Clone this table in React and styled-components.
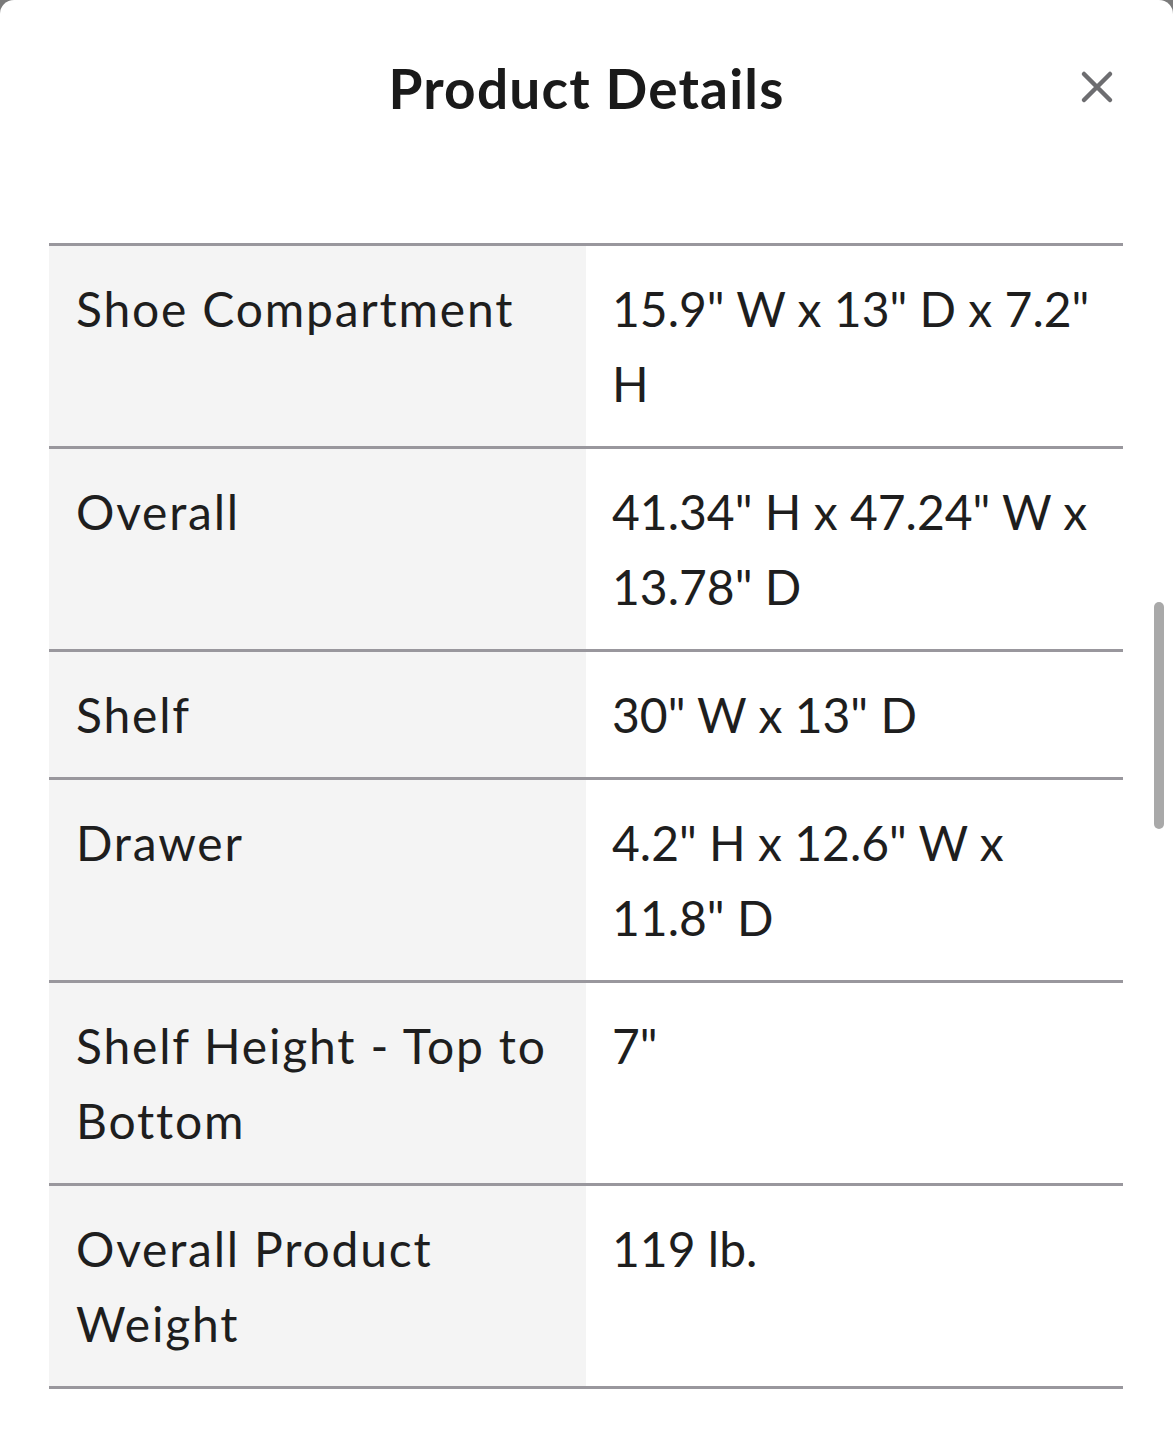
import styled, { createGlobalStyle } from "styled-components";

const GlobalStyle = createGlobalStyle`
  html, body {
    margin: 0;
    padding: 0;
    background: #7a7a7a;
  }
  body {
    font-family: Lato, "Open Sans", sans-serif;
    color: #1e1e1e;
  }
`;

const details = [
  { label: ["Shoe Compartment"], value: ['15.9" W x 13" D x 7.2"', "H"] },
  { label: ["Overall"], value: ['41.34" H x 47.24" W x', '13.78" D'] },
  { label: ["Shelf"], value: ['30" W x 13" D'] },
  { label: ["Drawer"], value: ['4.2" H x 12.6" W x', '11.8" D'] },
  { label: ["Shelf Height - Top to", "Bottom"], value: ['7"'] },
  { label: ["Overall Product", "Weight"], value: ["119 lb."] },
];

const Lines = ({ lines }) =>
  lines.map((line, i) => (
    <span key={i}>
      {line}
      {i < lines.length - 1 && <br />}
    </span>
  ));

export default function App() {
  return (
    <>
      <GlobalStyle />
      <Sheet>
        <Header>
          <Title>Product Details</Title>
          <CloseButton aria-label="Close">
            <svg width="34" height="34" viewBox="0 0 34 34">
              <path
                d="M4 4 L30 30 M30 4 L4 30"
                stroke="#6d6d70"
                strokeWidth="4.5"
                strokeLinecap="round"
              />
            </svg>
          </CloseButton>
        </Header>

        <Body>
          <Table>
            {details.map((row, i) => (
              <Row key={i}>
                <Label>
                  <Lines lines={row.label} />
                </Label>
                <Value>
                  <Lines lines={row.value} />
                </Value>
              </Row>
            ))}
          </Table>
          <Scrollbar />
        </Body>
      </Sheet>
    </>
  );
}

const Sheet = styled.div`
  background: #ffffff;
  border-radius: 14px 14px 0 0;
  min-height: 1440px;
  box-sizing: border-box;
  position: relative;
`;

const Header = styled.div`
  height: 176px;
  display: flex;
  justify-content: center;
  align-items: flex-start;
  padding-top: 56px;
  box-sizing: border-box;
  position: relative;
`;

const Title = styled.h2`
  margin: 0;
  font-size: 55px;
  font-weight: 700;
  letter-spacing: 1.2px;
  line-height: 64px;
  color: #1a1a1a;
`;

const CloseButton = styled.button`
  position: absolute;
  top: 70px;
  right: 59px;
  background: transparent;
  border: none;
  padding: 0;
  cursor: pointer;
  display: flex;
`;

const Body = styled.div`
  padding: 67px 50px 0 49px;
`;

const Table = styled.div`
  border-top: 3px solid #99979d;
`;

const Row = styled.div`
  display: grid;
  grid-template-columns: 537px 1fr;
  border-bottom: 3px solid #99979d;
  font-size: 48px;
  line-height: 75px;
`;

const Label = styled.div`
  background: #f4f4f4;
  padding: 25px 12px 25px 27px;
  letter-spacing: 1.8px;
`;

const Value = styled.div`
  padding: 25px 20px 25px 26px;
`;

const Scrollbar = styled.div`
  position: absolute;
  top: 602px;
  right: 9px;
  width: 10px;
  height: 227px;
  border-radius: 5px;
  background: #a9a9a9;
`;
